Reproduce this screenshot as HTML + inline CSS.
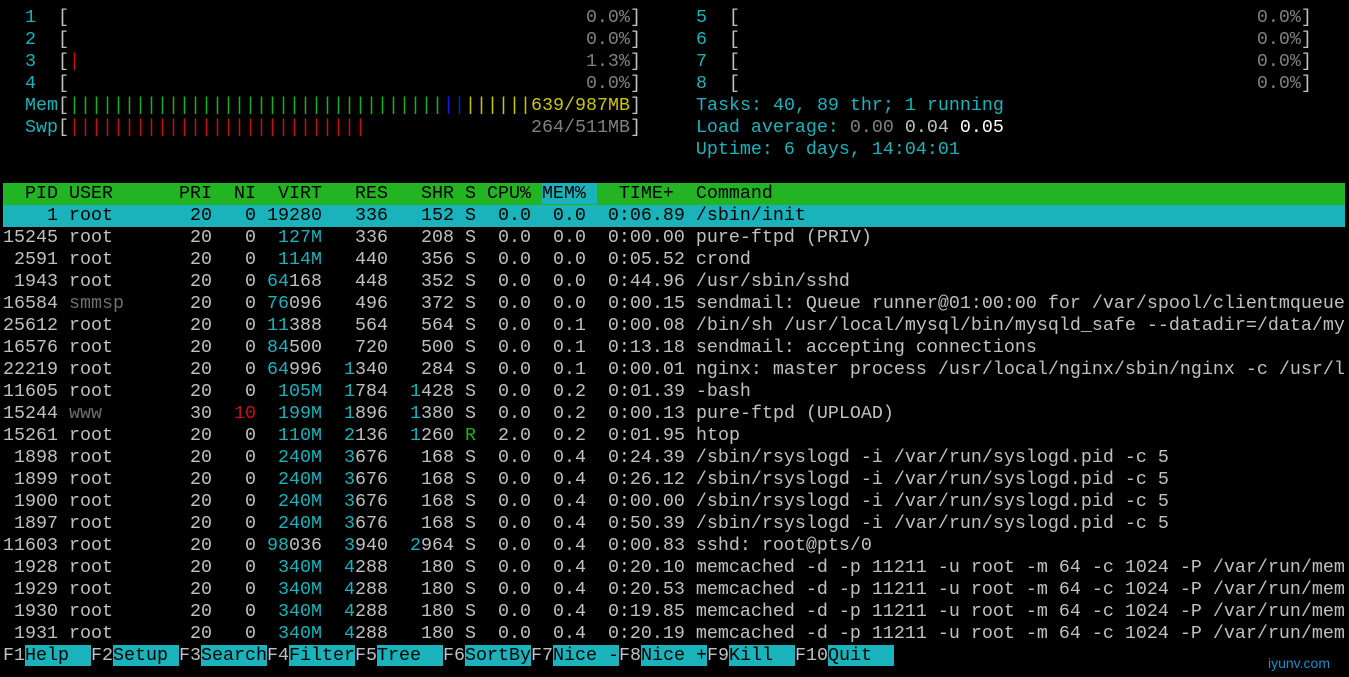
<!DOCTYPE html>
<html><head><meta charset="utf-8"><style>
html,body{margin:0;padding:0;background:#000;width:1349px;height:677px;overflow:hidden}
.l{position:absolute;left:3px;height:22px;line-height:22px;white-space:pre;font-family:"Liberation Mono",monospace;font-size:18.33px;color:#c0c0c0;width:1346px;overflow:hidden}
.c{color:#1ab3bb}.g{color:#808080}.d{color:#6e6e6e}.r{color:#c81010}.gr{color:#18b418}.b{color:#1818e0}.y{color:#c8c800}.w{color:#fff}.k{color:#000}
.hb{background:#22b422;color:#000;width:1342px}
.sel{background:#1ab3bb;color:#000;width:1342px}
.cb{background:#1ab3bb;color:#000}
</style></head><body>
<div class="l" style="top:7px"><span class="c">  1</span>  [<span class="g">                                               0.0%</span>]     <span class="c">5</span>  [<span class="g">                                               0.0%</span>]</div>
<div class="l" style="top:29px"><span class="c">  2</span>  [<span class="g">                                               0.0%</span>]     <span class="c">6</span>  [<span class="g">                                               0.0%</span>]</div>
<div class="l" style="top:51px"><span class="c">  3</span>  [<span class="r">|</span><span class="g">                                              1.3%</span>]     <span class="c">7</span>  [<span class="g">                                               0.0%</span>]</div>
<div class="l" style="top:73px"><span class="c">  4</span>  [<span class="g">                                               0.0%</span>]     <span class="c">8</span>  [<span class="g">                                               0.0%</span>]</div>
<div class="l" style="top:95px"><span class="c">  Mem</span>[<span class="gr">||||||||||||||||||||||||||||||||||</span><span class="b">||</span><span class="y">||||||639/987MB</span>]     <span class="c">Tasks: 40, 89 thr; 1 running</span></div>
<div class="l" style="top:117px"><span class="c">  Swp</span>[<span class="r">|||||||||||||||||||||||||||</span><span class="g">               264/511MB</span>]     <span class="c">Load average: </span><span class="g">0.00</span> 0.04 <span class="w">0.05</span></div>
<div class="l" style="top:139px">                                                               <span class="c">Uptime: 6 days, 14:04:01</span></div>
<div class="l hb" style="top:183px">  PID USER      PRI  NI  VIRT   RES   SHR S CPU% <span class="cb">MEM% </span>  TIME+  Command                                                                  </div>
<div class="l sel" style="top:205px">    1 root       20   0 19280   336   152 S  0.0  0.0  0:06.89 /sbin/init</div>
<div class="l" style="top:227px">15245 root       20   0  <span class="c">127M</span>   336   208 S  0.0  0.0  0:00.00 pure-ftpd (PRIV)</div>
<div class="l" style="top:249px"> 2591 root       20   0  <span class="c">114M</span>   440   356 S  0.0  0.0  0:05.52 crond</div>
<div class="l" style="top:271px"> 1943 root       20   0 <span class="c">64</span>168   448   352 S  0.0  0.0  0:44.96 /usr/sbin/sshd</div>
<div class="l" style="top:293px">16584 <span class="d">smmsp</span>      20   0 <span class="c">76</span>096   496   372 S  0.0  0.0  0:00.15 sendmail: Queue runner@01:00:00 for /var/spool/clientmqueue</div>
<div class="l" style="top:315px">25612 root       20   0 <span class="c">11</span>388   564   564 S  0.0  0.1  0:00.08 /bin/sh /usr/local/mysql/bin/mysqld_safe --datadir=/data/my</div>
<div class="l" style="top:337px">16576 root       20   0 <span class="c">84</span>500   720   500 S  0.0  0.1  0:13.18 sendmail: accepting connections</div>
<div class="l" style="top:359px">22219 root       20   0 <span class="c">64</span>996  <span class="c">1</span>340   284 S  0.0  0.1  0:00.01 nginx: master process /usr/local/nginx/sbin/nginx -c /usr/l</div>
<div class="l" style="top:381px">11605 root       20   0  <span class="c">105M</span>  <span class="c">1</span>784  <span class="c">1</span>428 S  0.0  0.2  0:01.39 -bash</div>
<div class="l" style="top:403px">15244 <span class="d">www</span>        30  <span class="r">10</span>  <span class="c">199M</span>  <span class="c">1</span>896  <span class="c">1</span>380 S  0.0  0.2  0:00.13 pure-ftpd (UPLOAD)</div>
<div class="l" style="top:425px">15261 root       20   0  <span class="c">110M</span>  <span class="c">2</span>136  <span class="c">1</span>260 <span class="gr">R</span>  2.0  0.2  0:01.95 htop</div>
<div class="l" style="top:447px"> 1898 root       20   0  <span class="c">240M</span>  <span class="c">3</span>676   168 S  0.0  0.4  0:24.39 /sbin/rsyslogd -i /var/run/syslogd.pid -c 5</div>
<div class="l" style="top:469px"> 1899 root       20   0  <span class="c">240M</span>  <span class="c">3</span>676   168 S  0.0  0.4  0:26.12 /sbin/rsyslogd -i /var/run/syslogd.pid -c 5</div>
<div class="l" style="top:491px"> 1900 root       20   0  <span class="c">240M</span>  <span class="c">3</span>676   168 S  0.0  0.4  0:00.00 /sbin/rsyslogd -i /var/run/syslogd.pid -c 5</div>
<div class="l" style="top:513px"> 1897 root       20   0  <span class="c">240M</span>  <span class="c">3</span>676   168 S  0.0  0.4  0:50.39 /sbin/rsyslogd -i /var/run/syslogd.pid -c 5</div>
<div class="l" style="top:535px">11603 root       20   0 <span class="c">98</span>036  <span class="c">3</span>940  <span class="c">2</span>964 S  0.0  0.4  0:00.83 sshd: root@pts/0</div>
<div class="l" style="top:557px"> 1928 root       20   0  <span class="c">340M</span>  <span class="c">4</span>288   180 S  0.0  0.4  0:20.10 memcached -d -p 11211 -u root -m 64 -c 1024 -P /var/run/mem</div>
<div class="l" style="top:579px"> 1929 root       20   0  <span class="c">340M</span>  <span class="c">4</span>288   180 S  0.0  0.4  0:20.53 memcached -d -p 11211 -u root -m 64 -c 1024 -P /var/run/mem</div>
<div class="l" style="top:601px"> 1930 root       20   0  <span class="c">340M</span>  <span class="c">4</span>288   180 S  0.0  0.4  0:19.85 memcached -d -p 11211 -u root -m 64 -c 1024 -P /var/run/mem</div>
<div class="l" style="top:623px"> 1931 root       20   0  <span class="c">340M</span>  <span class="c">4</span>288   180 S  0.0  0.4  0:20.19 memcached -d -p 11211 -u root -m 64 -c 1024 -P /var/run/mem</div>
<div class="l" style="top:645px">F1<span class="cb">Help  </span>F2<span class="cb">Setup </span>F3<span class="cb">Search</span>F4<span class="cb">Filter</span>F5<span class="cb">Tree  </span>F6<span class="cb">SortBy</span>F7<span class="cb">Nice -</span>F8<span class="cb">Nice +</span>F9<span class="cb">Kill  </span>F10<span class="cb">Quit  </span></div>
<div style="position:absolute;left:1268px;top:655px;font-family:'Liberation Sans',sans-serif;font-size:14px;color:#1a8fc8">iyunv.com</div>
</body></html>
